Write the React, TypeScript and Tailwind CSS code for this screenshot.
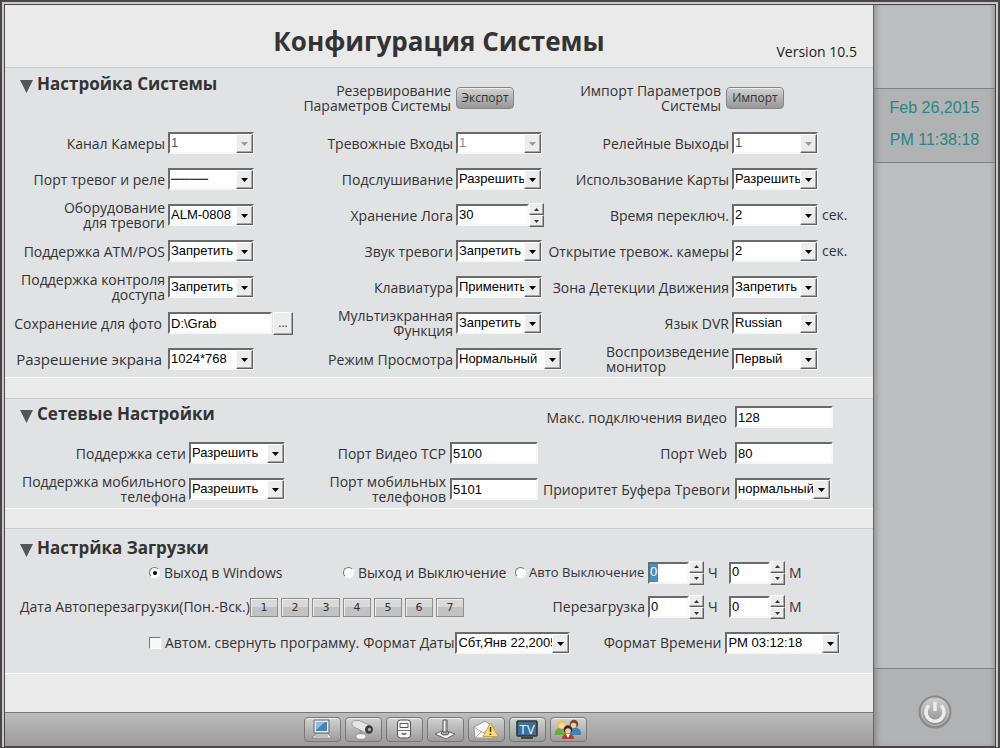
import { useId, useState } from "react";
import type { ReactNode } from "react";
import clsx from "clsx";

const sunken = "border-2 border-t-[#6b6b6b] border-l-[#6b6b6b] border-r-[#f6f6f6] border-b-[#f6f6f6] bg-white";
const raised = "border border-t-white border-l-white border-r-[#5f5f5f] border-b-[#5f5f5f] bg-[#ececec] shadow-[inset_-1px_-1px_0_#a8a8a8]";
const controlFont = "font-['Liberation_Sans',sans-serif] text-[13px] text-black";

const Arrow = ({ up, className }: { up?: boolean; className?: string }) => (
    <svg viewBox="0 0 7 4" className={clsx("fill-current", up && "rotate-180", className)} aria-hidden="true">
        <path d="M0 0h7L3.5 4z" />
    </svg>
);

type SelectProps = { id?: string; value: string; width: string; disabled?: boolean; tone?: string; label?: string };

const Select = ({ id, value, width, disabled, tone, label }: SelectProps) => (
    <span className={clsx("relative inline-flex h-[22px] shrink-0", width)}>
        <select
            id={id}
            aria-label={label}
            disabled={disabled}
            className={clsx("w-full appearance-none rounded-none pr-4 pl-px opacity-100 outline-none", sunken, controlFont, tone)}
        >
            <option>{value}</option>
        </select>
        <span className={clsx("pointer-events-none absolute top-0.5 right-px bottom-px flex w-[17px] items-center justify-center", raised)}>
            <Arrow className={clsx("h-1 w-[7px]", disabled ? "text-[#9a9a9a]" : "text-black")} />
        </span>
    </span>
);

const TextBox = ({ id, value, width }: { id?: string; value: string; width: string }) => (
    <input id={id} defaultValue={value} className={clsx("h-[22px] shrink-0 rounded-none px-px outline-none", sunken, controlFont, width)} />
);

const Spinner = ({ id, value, width, label, selected }: { id?: string; value: number; width: string; label?: string; selected?: boolean }) => {
    const [count, setCount] = useState(value);
    return (
        <span className="flex shrink-0 items-center">
            <span className={clsx("flex h-[22px]", sunken, width)}>
                <input
                    id={id}
                    aria-label={label}
                    value={count}
                    onChange={(e) => setCount(Number(e.target.value) || 0)}
                    className={clsx("outline-none", controlFont, selected ? "w-2 bg-[#4a8cc4] text-[#ffffff]!" : "w-full px-px")}
                />
            </span>
            <span className="flex h-6 w-[15px] flex-col">
                <button type="button" aria-label="+" onClick={() => setCount(count + 1)} className={clsx("flex flex-1 items-center justify-center", raised)}>
                    <Arrow up className="h-[3px] w-[5px]" />
                </button>
                <button type="button" aria-label="-" onClick={() => setCount(Math.max(0, count - 1))} className={clsx("flex flex-1 items-center justify-center", raised)}>
                    <Arrow className="h-[3px] w-[5px]" />
                </button>
            </span>
        </span>
    );
};

const Field = ({ label, labelClass, children }: { label: ReactNode; labelClass: string; children: (id: string) => ReactNode }) => {
    const id = useId();
    return (
        <div className="flex h-9 items-center">
            <label htmlFor={id} className={clsx("shrink-0 text-right leading-[15px] whitespace-nowrap", labelClass)}>{label}</label>
            {children(id)}
        </div>
    );
};

const Heading = ({ children }: { children: ReactNode }) => (
    <h2 className="flex items-center gap-1 pl-[15px] text-[17px] leading-6 font-bold text-[#333]">
        <svg viewBox="0 0 13 13" className="mt-1 size-[13px] fill-[#555]" aria-hidden="true">
            <path d="M0 0h13L6.5 13z" />
        </svg>
        {children}
    </h2>
);

const PillButton = ({ id, children }: { id: string; children: string }) => (
    <button
        id={id}
        type="button"
        className="ml-[5px] h-[22px] w-[58px] shrink-0 rounded-sm border border-[#858585] bg-linear-to-b from-[#d2d2d2] to-[#979797] text-xs leading-none shadow-[inset_0_1px_0_#eee]"
    >
        {children}
    </button>
);

const section = "border-y border-t-[#c9cbcd] border-b-white bg-[#e1e2e4]";
const columns = "grid grid-cols-[minmax(0,288fr)_minmax(0,250fr)_minmax(0,330fr)]";
const l1 = "w-[163px] pr-[3px]";
const l3 = "w-[189px] pr-[3px]";
const w = "w-[86px]";

const SystemSettings = () => (
    <section className={clsx("pt-1", section)}>
        <div className={clsx("h-[53px]", columns)}>
            <div><Heading>Настройка Системы</Heading></div>
            <div className="pt-2">
                <Field labelClass="w-[158px]" label={<>Резервирование<br />Параметров Системы</>}>{(id) => <PillButton id={id}>Экспорт</PillButton>}</Field>
            </div>
            <div className="pt-2">
                <Field labelClass="w-[178px]" label={<>Импорт Параметров<br />Системы</>}>{(id) => <PillButton id={id}>Импорт</PillButton>}</Field>
            </div>
        </div>
        <div className={columns}>
            <Field labelClass={l1} label="Канал Камеры">{(id) => <Select id={id} width={w} value="1" disabled tone="text-[#555]!" />}</Field>
            <Field labelClass={l1} label="Тревожные Входы">{(id) => <Select id={id} width={w} value="1" disabled tone="text-[#888]!" />}</Field>
            <Field labelClass={l3} label="Релейные Выходы">{(id) => <Select id={id} width={w} value="1" disabled tone="text-[#555]!" />}</Field>

            <Field labelClass={l1} label="Порт тревог и реле">{(id) => <Select id={id} width={w} value="────" />}</Field>
            <Field labelClass={l1} label="Подслушивание">{(id) => <Select id={id} width={w} value="Разрешить" />}</Field>
            <Field labelClass={l3} label="Использование Карты">{(id) => <Select id={id} width={w} value="Разрешить" />}</Field>

            <Field labelClass={l1} label={<>Оборудование<br />для тревоги</>}>{(id) => <Select id={id} width={w} value="ALM-0808" />}</Field>
            <Field labelClass={l1} label="Хранение Лога">{(id) => <Spinner id={id} width="w-[73px]" value={30} />}</Field>
            <Field labelClass={l3} label="Время переключ.">{(id) => <><Select id={id} width={w} value="2" /><span className="pl-1">сек.</span></>}</Field>

            <Field labelClass={l1} label="Поддержка ATM/POS">{(id) => <Select id={id} width={w} value="Запретить" />}</Field>
            <Field labelClass={l1} label="Звук тревоги">{(id) => <Select id={id} width={w} value="Запретить" />}</Field>
            <Field labelClass={l3} label="Открытие тревож. камеры">{(id) => <><Select id={id} width={w} value="2" /><span className="pl-1">сек.</span></>}</Field>

            <Field labelClass={l1} label={<>Поддержка контроля<br />доступа</>}>{(id) => <Select id={id} width={w} value="Запретить" />}</Field>
            <Field labelClass={l1} label="Клавиатура">{(id) => <Select id={id} width={w} value="Применить" />}</Field>
            <Field labelClass={l3} label="Зона Детекции Движения">{(id) => <Select id={id} width={w} value="Запретить" />}</Field>

            <Field labelClass="w-[163px] pr-[6px]" label="Сохранение для фото">
                {(id) => (
                    <>
                        <TextBox id={id} width="w-[104px]" value="D:\Grab" />
                        <button type="button" className={clsx("ml-px h-[23px] w-[22px] text-xs leading-none", raised)}>...</button>
                    </>
                )}
            </Field>
            <Field labelClass={l1} label={<>Мультиэкранная<br />Функция</>}>{(id) => <Select id={id} width={w} value="Запретить" />}</Field>
            <Field labelClass={l3} label="Язык DVR">{(id) => <Select id={id} width={w} value="Russian" />}</Field>

            <Field labelClass="w-[163px] pr-[6px] text-[15px]" label="Разрешение экрана">{(id) => <Select id={id} width={w} value="1024*768" />}</Field>
            <Field labelClass={l1} label="Режим Просмотра">{(id) => <Select id={id} width="w-[106px]" value="Нормальный" />}</Field>
            <Field labelClass={l3} label={<span className="inline-block text-left">Воспроизведение<br />монитор</span>}>{(id) => <Select id={id} width={w} value="Первый" />}</Field>
        </div>
    </section>
);

const n1 = "w-[184px] pr-[3px]";
const n2 = "w-[157px] pr-1";
const n3 = "w-48 pr-2";

const NetworkSettings = () => (
    <section className={clsx("pb-px", section)}>
        <div className={columns}>
            <div className="pt-[3px]"><Heading>Сетевые Настройки</Heading></div>
            <div />
            <Field labelClass={n3} label="Макс. подключения видео">{(id) => <TextBox id={id} width="w-[98px]" value="128" />}</Field>

            <Field labelClass={n1} label="Поддержка сети">{(id) => <Select id={id} width="w-24" value="Разрешить" />}</Field>
            <Field labelClass={n2} label="Порт Видео TCP">{(id) => <TextBox id={id} width="w-[88px]" value="5100" />}</Field>
            <Field labelClass={n3} label="Порт Web">{(id) => <TextBox id={id} width="w-[98px]" value="80" />}</Field>

            <Field labelClass={n1} label={<>Поддержка мобильного<br />телефона</>}>{(id) => <Select id={id} width="w-24" value="Разрешить" />}</Field>
            <Field labelClass={n2} label={<>Порт мобильных<br />телефонов</>}>{(id) => <TextBox id={id} width="w-[88px]" value="5101" />}</Field>
            <Field labelClass={n3} label="Приоритет Буфера Тревоги">{(id) => <Select id={id} width="w-24" value="нормальный" />}</Field>
        </div>
    </section>
);

const Radio = ({ label, width, checked }: { label: string; width: string; checked?: boolean }) => (
    <label className={clsx("flex shrink-0 items-center whitespace-nowrap", width)}>
        <input
            type="radio"
            name="exit"
            defaultChecked={checked}
            className="flex size-[11px] shrink-0 appearance-none items-center justify-center rounded-full border border-t-[#777] border-r-white border-b-white border-l-[#777] bg-white checked:before:size-1 checked:before:rounded-full checked:before:bg-black"
        />
        {label}
    </label>
);

const HoursMinutes = ({ name, selected }: { name: string; selected?: boolean }) => (
    <div className="flex items-center">
        <Spinner label={`${name}, Ч`} width="w-[41px]" value={0} selected={selected} />
        <span className="w-[25px] pl-1">Ч</span>
        <Spinner label={`${name}, М`} width="w-[41px]" value={0} />
        <span className="pl-1">М</span>
    </div>
);

const BootSettings = () => {
    const id = useId();
    const columns = "grid grid-cols-[minmax(0,643fr)_minmax(0,225fr)] items-center";
    return (
        <section className={clsx("pt-[7px] pb-3", section)}>
            <Heading>Настрйка Загрузки</Heading>
            <div className={clsx("h-[25px]", columns)}>
                <div className="flex pl-36">
                    <Radio width="w-[194px] gap-1" label="Выход в Windows" checked />
                    <Radio width="w-[172px] gap-1" label="Выход и Выключение" />
                    <Radio width="gap-[3px] text-[13px]" label="Авто Выключение" />
                </div>
                <HoursMinutes name="Авто Выключение" selected />
            </div>
            <div className={clsx("mt-1 h-9", columns)}>
                <div className="flex items-center pr-[3px] pl-[15px]">
                    <span className="w-[229px] whitespace-nowrap">Дата Автоперезагрузки(Пон.-Вск.)</span>
                    <div className="flex gap-[3px] pl-px">
                        {[1, 2, 3, 4, 5, 6, 7].map((day) => (
                            <button
                                key={day}
                                type="button"
                                className="h-[19px] w-7 border border-[#8e8e8e] bg-linear-to-b from-[#d9d9d9] from-50% to-[#c2c2c2] to-50% font-['DejaVu_Sans',sans-serif] text-[11px] leading-none shadow-[inset_1px_1px_0_#eee]"
                            >
                                {day}
                            </button>
                        ))}
                    </div>
                    <span className="ml-auto">Перезагрузка</span>
                </div>
                <HoursMinutes name="Перезагрузка" />
            </div>
            <div className="flex h-9 items-center whitespace-nowrap">
                <label className="flex items-center gap-1 pl-36">
                    <input type="checkbox" className="size-3 appearance-none border border-t-[#777] border-r-white border-b-white border-l-[#777] bg-[#f8f8f8] checked:bg-[#4a8cc4]" />
                    Автом. свернуть программу.
                </label>
                <label htmlFor={`${id}-date`} className="pr-px pl-1">Формат Даты</label>
                <Select id={`${id}-date`} width="w-[115px]" value="Сбт,Янв 22,2005" />
                <label htmlFor={`${id}-time`} className="w-[155px] pr-1 text-right">Формат Времени</label>
                <Select id={`${id}-time`} width="w-[115px]" value="PM 03:12:18" />
            </div>
        </section>
    );
};

const tools = [
    {
        name: "Компьютер",
        icon: (
            <>
                <path d="M6 1h15v13H6z" fill="#e8e8e8" stroke="#666" />
                <path d="M8 3h11v9H8z" fill="#4585b5" />
                <path d="M8 3h9l-9 8z" fill="#8dbbdd" />
                <path d="M8 15h12l4 4H4z" fill="#f2f2f2" stroke="#777" strokeWidth=".7" />
                <path d="M7 17h13" stroke="#888" />
            </>
        ),
    },
    {
        name: "Камера",
        icon: (
            <>
                <path d="M12 9v7" stroke="#999" strokeWidth="3" />
                <ellipse cx="12" cy="17.5" rx="5" ry="2.8" fill="#f2f2f2" stroke="#888" strokeWidth=".7" />
                <path d="M6 1.5c-4 1-4 5 0 7l12 6 3.5-8L10 1.500z" fill="#e6e6e6" stroke="#888" strokeWidth=".7" />
                <ellipse cx="20" cy="10.5" rx="4" ry="4.3" fill="#3c3c3c" />
                <circle cx="20.5" cy="10.5" r="1.7" fill="#aaa" />
            </>
        ),
    },
    {
        name: "Датчик",
        icon: (
            <>
                <rect x="7.5" y="1" width="13" height="18" rx="3" fill="#f3f3f3" stroke="#555" />
                <path d="M10 4.500h8v4h-8z" fill="#fff" stroke="#555" />
                <path d="M8 11.500h12" stroke="#777" />
                <path d="M11 14h6l-1.500 2h-3z" fill="#777" />
            </>
        ),
    },
    {
        name: "Джойстик",
        icon: (
            <>
                <path d="M4 15l9-4 11 4-9 5z" fill="#f4f4f4" stroke="#666" />
                <ellipse cx="14" cy="14" rx="4" ry="2" fill="#aaa" stroke="#555" />
                <path d="M12 1h4v12h-4z" fill="#eee" stroke="#555" />
                <path d="M15 2v11" stroke="#777" />
            </>
        ),
    },
    {
        name: "Тревога",
        icon: (
            <>
                <path d="M2 8l11-6 9 6-1 11H3z" fill="#f5f5f5" stroke="#999" />
                <path d="M2 8l9 6 9-6M3 19l7-7" fill="none" stroke="#aaa" />
                <path d="M18.500 4l7.500 13.500H11z" fill="#f8dc72" stroke="#c7a640" />
                <path d="M18.500 8v5M18.500 14.500V16" stroke="#443" strokeWidth="1.6" />
            </>
        ),
    },
    {
        name: "TV",
        icon: (
            <>
                <rect x="4" y="2" width="20" height="15" rx="1" fill="#3d6f99" stroke="#333" strokeWidth="1.6" />
                <path d="M8 19h12" stroke="#444" strokeWidth="2" />
                <text x="14" y="14.5" textAnchor="middle" fontSize="12" fill="#eaf4fb" fontFamily="Liberation Sans, sans-serif">TV</text>
            </>
        ),
    },
    {
        name: "Пользователи",
        icon: (
            <>
                <path d="M1 14c0-7 12-7 12 0v2H1z" fill="#72a842" />
                <circle cx="7.5" cy="5.5" r="4.3" fill="#efc24a" />
                <circle cx="8" cy="7" r="2.8" fill="#f6d8b4" />
                <path d="M15 14c0-7 12-7 12 0v2H15z" fill="#3f82b5" />
                <circle cx="20" cy="5" r="4.3" fill="#7c4a2a" />
                <circle cx="19.5" cy="6.5" r="2.8" fill="#f3c9a0" />
                <path d="M8 20c0-7 12-7 12 0z" fill="#b8392f" />
                <path d="M12 15h4l-2 4z" fill="#fff" />
                <circle cx="14" cy="10.5" r="4.2" fill="#3c2a20" />
                <circle cx="14" cy="12" r="2.8" fill="#f3c9a0" />
            </>
        ),
    },
];

const Toolbar = () => (
    <nav className="flex h-[34px] items-center justify-center gap-1 border-t border-[#777] bg-linear-to-b from-[#bcbcbc] to-[#9b9b9b] pl-3">
        {tools.map((tool) => (
            <button
                key={tool.name}
                type="button"
                aria-label={tool.name}
                className="flex h-[25px] w-[37px] items-center justify-center rounded-sm border border-[#777] bg-linear-to-b from-[#d3d3d3] to-[#9c9c9c] shadow-[inset_0_1px_0_#eee]"
            >
                <svg viewBox="0 0 28 21" className="h-[21px] w-7">{tool.icon}</svg>
            </button>
        ))}
    </nav>
);

const Sidebar = () => (
    <aside className="flex w-[122px] shrink-0 flex-col border-l border-[#666] bg-[#bdbec0] shadow-[inset_5px_0_5px_-2px_#999,inset_-4px_0_4px_-2px_#999]">
        <div className="h-[84px] border-b border-[#808080]" />
        <div className="flex h-[74px] flex-col items-center justify-center gap-2 border-b border-[#808080] bg-black/6 pb-1 font-['Liberation_Sans',sans-serif] text-base text-[#2a8683]">
            <span>Feb 26,2015</span>
            <span>PM 11:38:18</span>
        </div>
        <div className="flex-1" />
        <div className="flex h-[78px] items-center justify-center border-t border-[#808080] bg-black/6 pt-2">
            <button type="button" aria-label="Выключение" className="size-9">
                <svg viewBox="0 0 36 36">
                    <defs>
                        <linearGradient id="power" x1="0" y1="0" x2="0" y2="1">
                            <stop offset="0" stopColor="#d4d4d4" />
                            <stop offset="1" stopColor="#858585" />
                        </linearGradient>
                    </defs>
                    <circle cx="18" cy="18" r="15.5" fill="url(#power)" stroke="#8a8a8a" strokeWidth="2" />
                    <circle cx="18" cy="18" r="13.5" fill="none" stroke="#c4c4c4" />
                    <path d="M12 11.500a9 9 0 1 0 12 0M18 8v9" fill="none" stroke="#ededed" strokeWidth="3.5" />
                </svg>
            </button>
        </div>
    </aside>
);

const App = () => (
    <div className="flex min-h-screen border-2 border-b border-[#4a4648] bg-[#c9c9c9] p-0.5 pb-0 font-['Open_Sans',sans-serif] text-sm text-[#333]">
        <div className="flex flex-1 border border-[#4a4648]">
            <main className="flex min-w-0 flex-1 flex-col bg-[#eaeaea]">
                <header className="grid h-[62px] grid-cols-[1fr_auto_1fr] items-center">
                    <h1 className="col-start-2 pt-3 text-[26px] font-bold">Конфигурация Системы</h1>
                    <span className="pt-8 pr-4 text-right text-sm text-[#222]">Version 10.5</span>
                </header>
                <SystemSettings />
                <div className="h-5" />
                <NetworkSettings />
                <div className="h-[19px]" />
                <BootSettings />
                <div className="min-h-9 flex-1" />
                <Toolbar />
            </main>
            <Sidebar />
        </div>
    </div>
);

export default App;
